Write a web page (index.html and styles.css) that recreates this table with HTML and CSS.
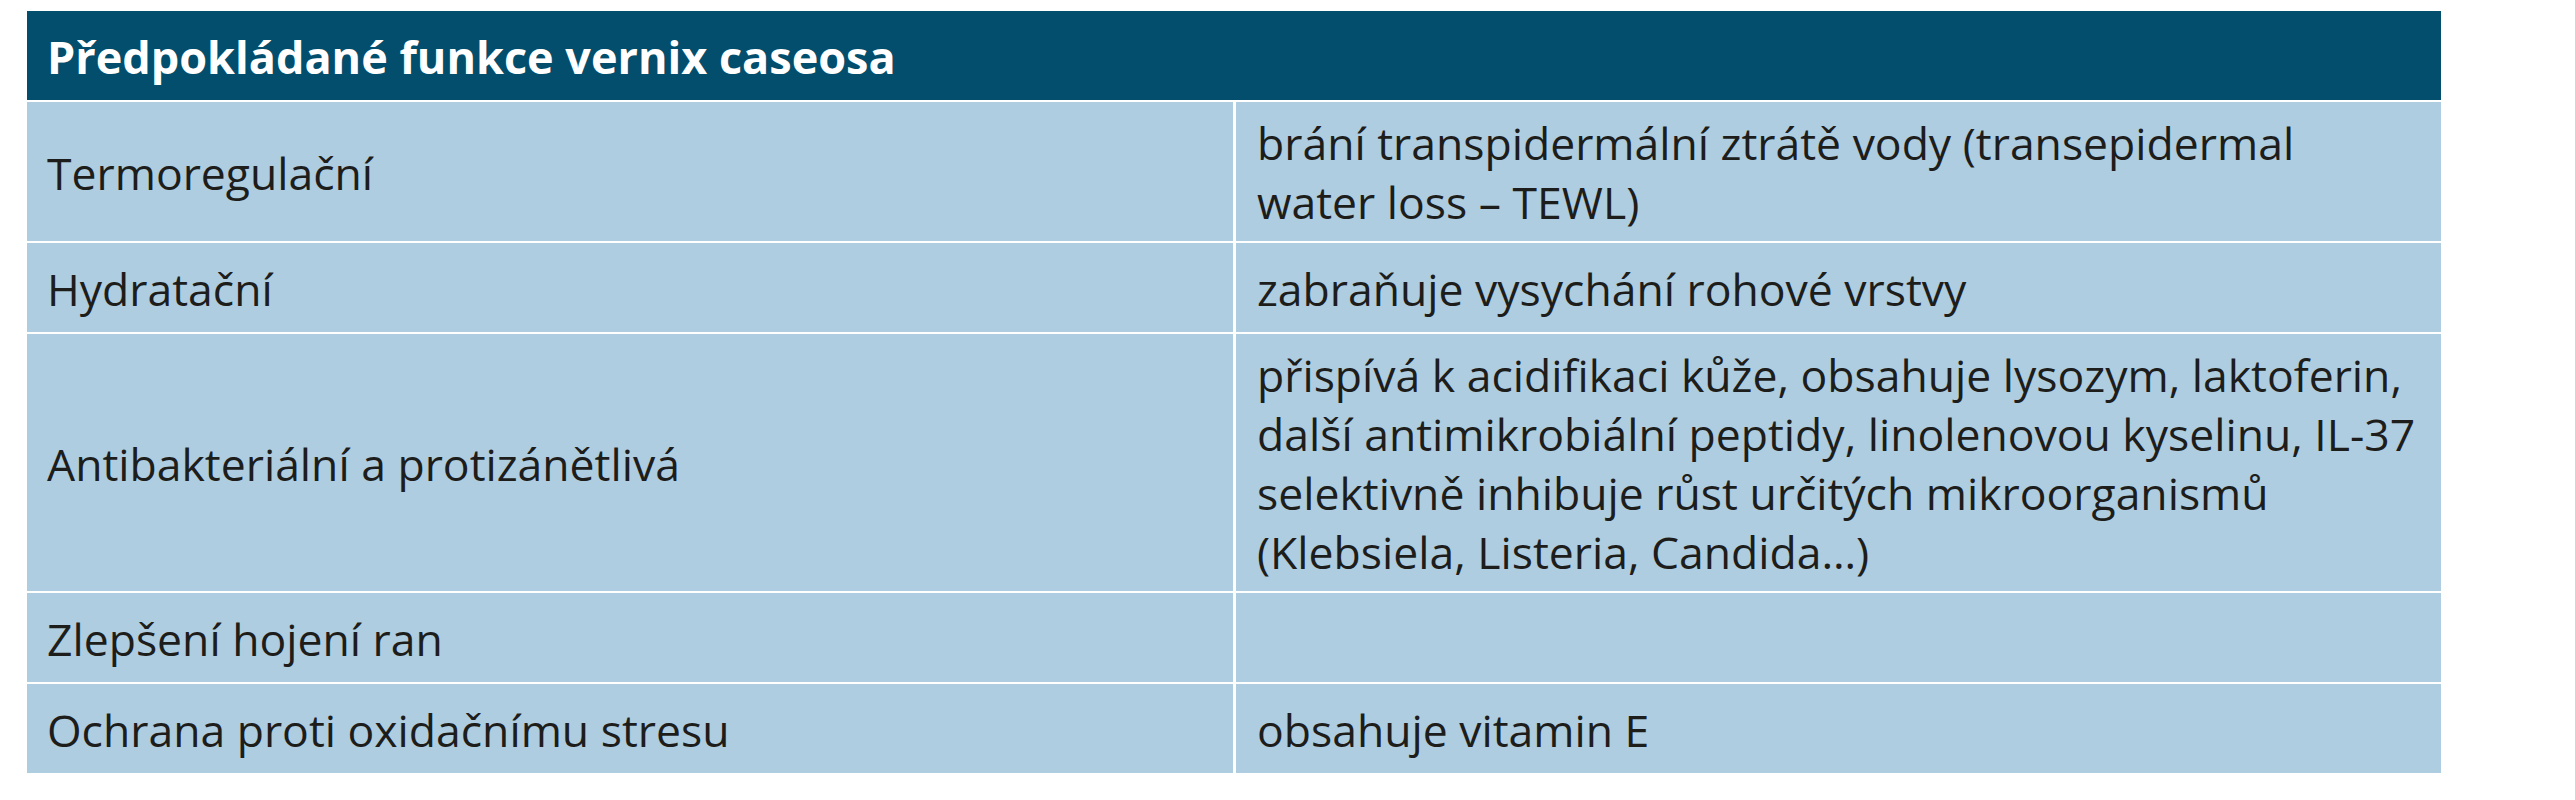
FILE: index.html
```html
<!DOCTYPE html>
<html lang="cs">
<head>
<meta charset="utf-8">
<title>Předpokládané funkce vernix caseosa</title>
<link rel="stylesheet" href="styles.css">
</head>
<body>
<div class="tbl">
  <div class="head">Předpokládané funkce vernix caseosa</div>
  <div class="cell">Termoregulační</div>
  <div class="cell">brání transpidermální ztrátě vody (transepidermal<br>water loss – TEWL)</div>
  <div class="cell">Hydratační</div>
  <div class="cell">zabraňuje vysychání rohové vrstvy</div>
  <div class="cell">Antibakteriální a protizánětlivá</div>
  <div class="cell">přispívá k acidifikaci kůže, obsahuje lysozym, laktoferin,<br>další antimikrobiální peptidy, linolenovou kyselinu, IL-37<br>selektivně inhibuje růst určitých mikroorganismů<br>(Klebsiela, Listeria, Candida…)</div>
  <div class="cell">Zlepšení hojení ran</div>
  <div class="cell"></div>
  <div class="cell">Ochrana proti oxidačnímu stresu</div>
  <div class="cell">obsahuje vitamin E</div>
</div>
</body>
</html>
```
FILE: styles.css
```css
html, body {
  margin: 0;
  padding: 0;
  background: #ffffff;
}

body {
  font-family: "Open Sans", "Noto Sans", sans-serif;
  color: #1d1d1b;
}

.tbl {
  display: grid;
  grid-template-columns: 1206px 1205px;
  column-gap: 3px;
  row-gap: 2px;
  width: 2414px;
  margin: 11px 0 0 27px;
}

.head {
  grid-column: 1 / -1;
  height: 89px;
  box-sizing: border-box;
  display: flex;
  align-items: center;
  padding: 2px 20px 0;
  background: #034e6c;
  color: #ffffff;
  font-weight: 700;
  font-size: 45px;
  line-height: 59px;
  white-space: nowrap;
}

.cell {
  min-height: 89px;
  box-sizing: border-box;
  display: flex;
  align-items: center;
  padding: 11px 20px 10px 20px;
  background: #afcde0;
  font-size: 44.5px;
  line-height: 59px;
  white-space: nowrap;
}

.cell:nth-child(odd) {
  padding-left: 21px;
}
```
